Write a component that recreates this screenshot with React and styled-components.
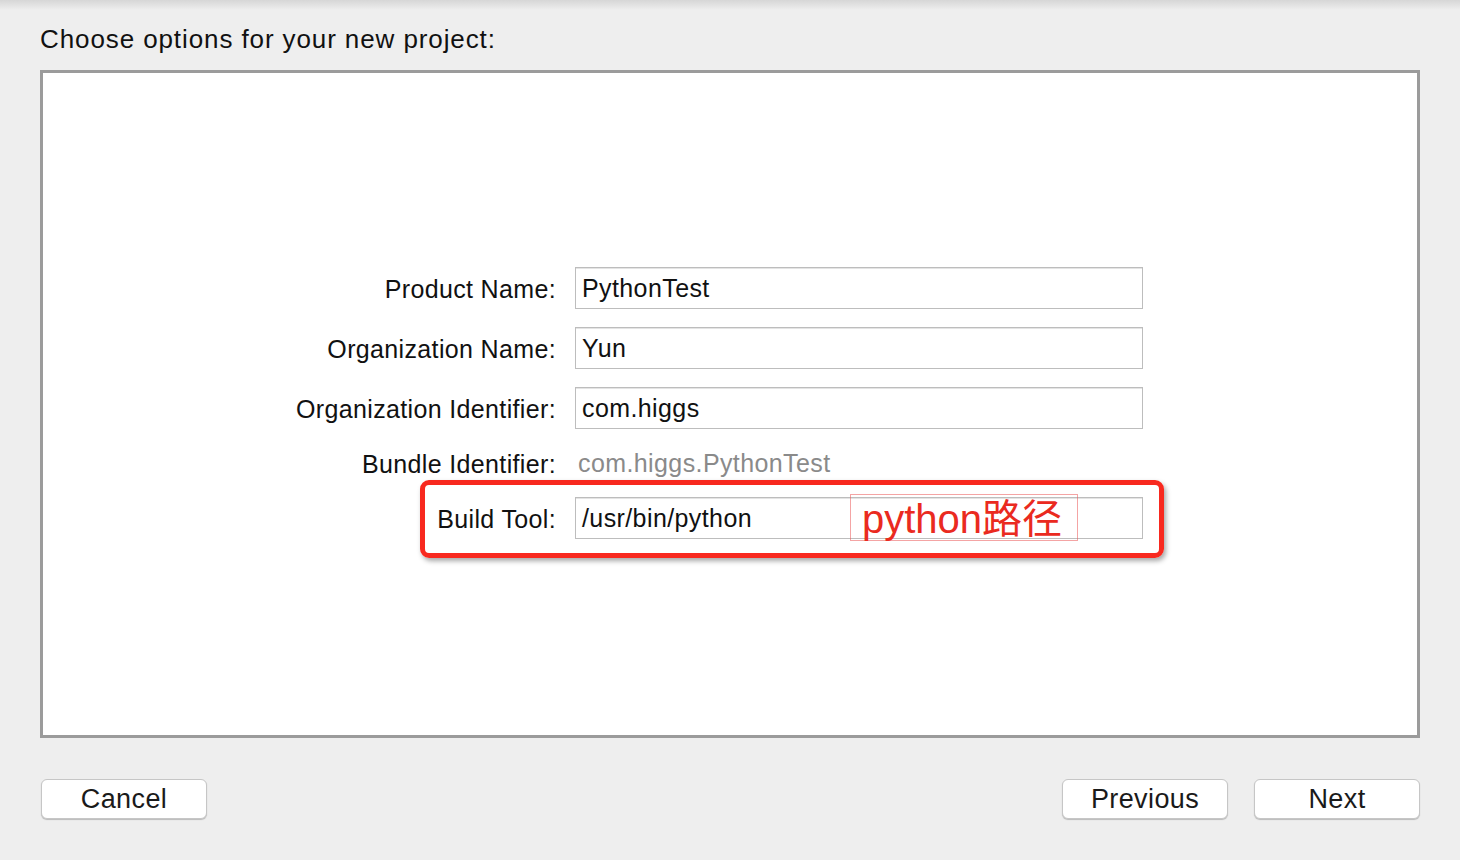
import React from "react";
import styled, { createGlobalStyle } from "styled-components";

const GlobalStyle = createGlobalStyle`
  html, body {
    margin: 0;
    padding: 0;
    background: #eeeeee;
  }
  body {
    font-family: "Liberation Sans", Arial, "Noto Sans CJK SC", sans-serif;
    color: #111;
  }
  * { box-sizing: border-box; }
`;

const Page = styled.div`
  width: 1460px;
  height: 860px;
  padding: 0 40px;
  background: #eeeeee;
  position: relative;
  overflow: hidden;
`;

const TopShade = styled.div`
  height: 10px;
  margin: 0 -40px;
  background: linear-gradient(to bottom, #d6d6d6, #eeeeee);
`;

const Title = styled.h1`
  margin: 14px 0 16px 0;
  font-size: 26px;
  line-height: 30px;
  letter-spacing: 0.9px;
  font-weight: normal;
  color: #111;
`;

const Panel = styled.div`
  height: 668px;
  background: #ffffff;
  border: 3px solid #9b9b9b;
  padding-top: 194px;
  display: flex;
  flex-direction: column;
  gap: 18px;
`;

const Row = styled.div`
  position: relative;
  display: grid;
  grid-template-columns: 513px 568px;
  column-gap: 19px;
  align-items: center;
  height: ${(p) => (p.$compact ? "32px" : "42px")};
`;

const Label = styled.div`
  text-align: right;
  font-size: 25px;
  line-height: 30px;
  letter-spacing: 0.35px;
  color: #111;
  margin-top: 2px;
`;

const Field = styled.div`
  height: 42px;
  border: 1px solid #bdbdbd;
  box-shadow: inset 0 1px 0 #e4e4e4;
  background: #fff;
  padding: 0 6px;
  display: flex;
  align-items: center;
  font-size: 25px;
  letter-spacing: 0.4px;
  color: #111;
`;

const StaticValue = styled.div`
  padding-left: 3px;
  font-size: 25px;
  line-height: 30px;
  letter-spacing: 0.4px;
  color: #8a8a8a;
`;

const Highlight = styled.div`
  position: absolute;
  left: 377px;
  top: -17px;
  width: 744px;
  height: 78px;
  border: 5px solid #f8291f;
  border-radius: 9px;
  box-shadow: 2px 3px 5px rgba(0, 0, 0, 0.35);
  pointer-events: none;
`;

const Note = styled.div`
  position: absolute;
  left: 807px;
  top: -3px;
  width: 228px;
  height: 47px;
  border: 1px solid rgba(235, 90, 90, 0.55);
  padding-left: 11px;
  display: flex;
  align-items: center;
  font-family: "Liberation Sans", "Noto Sans CJK SC", sans-serif;
  font-size: 40px;
  line-height: 44px;
  color: #ea2a20;
  white-space: nowrap;
  padding-top: 2px;
`;

const Footer = styled.div`
  margin-top: 41px;
  display: flex;
  justify-content: space-between;
`;

const ButtonGroup = styled.div`
  display: flex;
  gap: 26px;
`;

const Button = styled.button`
  width: 166px;
  height: 40px;
  background: #ffffff;
  border: 1px solid #c6c6c6;
  border-radius: 6px;
  box-shadow: 0 1px 1px rgba(0, 0, 0, 0.22);
  font-family: "Liberation Sans", Arial, sans-serif;
  font-size: 27px;
  letter-spacing: 0.4px;
  color: #1a1a1a;
  padding: 0;
  margin-left: ${(p) => (p.$nudge ? "1px" : "0")};
`;

const rows = [
  { label: "Product Name:", value: "PythonTest" },
  { label: "Organization Name:", value: "Yun" },
  { label: "Organization Identifier:", value: "com.higgs" },
];

export default function App() {
  return (
    <Page>
      <GlobalStyle />
      <TopShade />
      <Title>Choose options for your new project:</Title>
      <Panel>
        {rows.map((r) => (
          <Row key={r.label}>
            <Label>{r.label}</Label>
            <Field>{r.value}</Field>
          </Row>
        ))}
        <Row $compact>
          <Label>Bundle Identifier:</Label>
          <StaticValue>com.higgs.PythonTest</StaticValue>
        </Row>
        <Row>
          <Label>Build Tool:</Label>
          <Field>/usr/bin/python</Field>
          <Highlight />
          <Note>python路径</Note>
        </Row>
      </Panel>
      <Footer>
        <Button $nudge>Cancel</Button>
        <ButtonGroup>
          <Button>Previous</Button>
          <Button>Next</Button>
        </ButtonGroup>
      </Footer>
    </Page>
  );
}
